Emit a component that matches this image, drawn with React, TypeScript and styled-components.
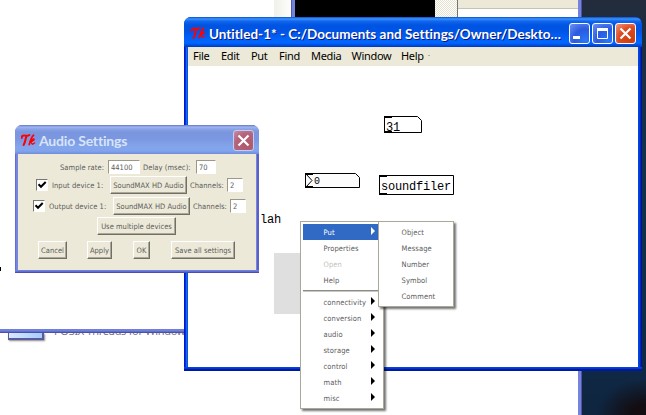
import React from 'react';
import styled, { createGlobalStyle } from 'styled-components';

const GlobalStyle = createGlobalStyle`
  * { box-sizing: border-box; }
  body { margin: 0; overflow: hidden; background: #fff; }
`;

const small = `"DejaVu Sans Condensed", "DejaVu Sans", sans-serif`;

const Desktop = styled.main`
  position: relative;
  width: 646px;
  height: 415px;
  overflow: hidden;
  background: radial-gradient(ellipse 50px 36px at 100% 100%, #130d12 30%, transparent 100%),
    linear-gradient(#222c3c, #14304a 35%, #102c48 75%, #0f2540);
  font-family: ${small};
`;

/* ---------- windows in the background ---------- */
const Backdrop = styled.section`
  position: absolute;
  left: 0;
  top: 0;
  width: 582px;
  height: 415px;
  background: #fff;
  border-right: 4px solid #7583dc;
  &::after {
    content: '';
    position: absolute;
    right: -4px;
    top: 0;
    width: 1px;
    height: 100%;
    background: #5050a8;
  }
`;
const TopStrip = styled.div`
  display: flex;
  height: 17px;
  padding-left: 274px;
`;
const PaleScroll = styled.div`
  width: 17px;
  background: linear-gradient(90deg, #f1f0ea, #fdfdfb);
`;
const Edge = styled.div`
  width: 4px;
  background: linear-gradient(90deg, #5555b4 1px, #7383dc 1px);
`;
const Console = styled.div`
  width: 140px;
  background: #000;
`;
const DitherScroll = styled.div`
  width: 23px;
  background: repeating-conic-gradient(#e4e1d0 0 25%, #fff 0 50%) 0 0 / 2px 2px;
  border-right: 1px solid #77766e;
`;
const Panel = styled.div`
  flex: 1;
  border-top: 8px solid #ece9d8;
  box-shadow: inset 0 1px #c6c3b3;
`;
const LeftEdge = styled.div`
  position: absolute;
  left: 0;
  top: 329px;
  width: 184px;
  height: 4px;
  background: linear-gradient(#6f80dc 0 2px, #6070cc 2px 3px, #4d4dae 3px);
`;
const Clipped = styled.div`
  position: absolute;
  left: 0;
  top: 333px;
  width: 184px;
  height: 12px;
  overflow: hidden;
  display: flex;
  padding-left: 8px;
`;
const Thumb = styled.div`
  flex: none;
  width: 36px;
  height: 7px;
  margin-right: 10px;
  border: solid #5a5aa0;
  border-width: 0 2px 2px 1px;
  background: linear-gradient(90deg, #d8e9fc, #a5cdfb);
  box-shadow: 1px 1px 2px #888;
`;
const ClippedText = styled.span`
  height: 2px;
  overflow: hidden;
  color: #777;
  font: 11px "Noto Sans", sans-serif;
  white-space: nowrap;
  letter-spacing: -0.3px;
  span { display: block; margin-top: -9px; line-height: 13px; }
`;
const Speck = styled.div`
  position: absolute;
  left: 0;
  top: 267px;
  width: 1px;
  height: 4px;
  background: #000;
`;

/* ---------- window frames ---------- */
const MainWindow = styled.section`
  position: absolute;
  left: 184px;
  top: 17px;
  width: 458px;
  height: 354px;
  display: flex;
  flex-direction: column;
  padding: 0 4px 4px;
  border-radius: 7px 7px 0 0;
  background: linear-gradient(#0c3fe0 0 1px, #0037d8 1px 2px, #001a9c 2px) bottom / 100% 4px no-repeat,
    linear-gradient(90deg, #0019cf 0 1px, #0831d9 1px 2px, #166aee 2px 3px, #0855dd 3px 4px, #0046e0 4px 455px, #003ddc 455px 456px, #0026b8 456px 457px, #00138c 457px);
`;
const MainTitle = styled.header`
  display: flex;
  align-items: center;
  height: 30px;
  margin: 0 -4px;
  padding: 3px 6px 0 7px;
  border-radius: 7px 7px 0 0;
  background: linear-gradient(#0b50c8 0, #3a93ff 2px, #1268f0 4px, #0054e2 8px, #0054e4 14px, #0062fa 22px, #0066ff 26px, #0050e0 28px, #0038bc 30px);
`;
const TitleText = styled.h1<{ $faded?: boolean }>`
  flex: 1;
  margin: 1px 0 0;
  font: bold ${p => (p.$faded ? '14px' : '13.5px')} Lato, "Open Sans", sans-serif;
  font-variant-ligatures: none;
  letter-spacing: ${p => (p.$faded ? '-0.2px' : '0.01px')};
  line-height: 18px;
  white-space: nowrap;
  color: ${p => (p.$faded ? '#d8e4f8' : '#fff')};
  text-shadow: ${p => (p.$faded ? 'none' : '1px 1px #0a1883')};
`;
const Controls = styled.div`
  display: flex;
  flex: none;
  gap: 2px;
`;
const Control = styled.button<{ $kind: 'blue' | 'red' | 'dim' }>`
  display: grid;
  flex: none;
  place-items: center;
  width: 21px;
  height: 21px;
  padding: 0;
  border: 1px solid ${p => (p.$kind === 'dim' ? '#c3cdf0' : '#fff')};
  border-radius: 3px;
  background: ${p =>
    p.$kind === 'blue'
      ? 'radial-gradient(circle at 80% 85%, #2a78f8, #2b5ae0 50%, #6d93f2 100%)'
      : p.$kind === 'red'
      ? 'radial-gradient(circle at 80% 85%, #d03c0c, #dc4a20 55%, #f09a80 100%)'
      : 'radial-gradient(circle at 70% 75%, #b0566a, #b4647c 60%, #c890a8 100%)'};
`;
const MenuBar = styled.nav`
  display: flex;
  height: 19px;
  flex: none;
  padding-left: 5px;
  background: #ece9d8;
  font: 11px "Noto Sans", sans-serif;
  line-height: 17px;
  color: #000;
`;
const MenuName = styled.span<{ $w: number }>`
  width: ${p => p.$w}px;
  white-space: nowrap;
  letter-spacing: -0.3px;
`;
const Dash = styled.i`
  width: 2px;
  height: 1px;
  margin-top: 8px;
  background: #aaa;
`;
const Canvas = styled.div`
  position: relative;
  flex: 1;
  background: #fff;
`;
const Node = styled.div<{ $x: number; $y: number }>`
  position: absolute;
  left: ${p => p.$x - 188}px;
  top: ${p => p.$y - 66}px;
  display: grid;
  font-family: "Liberation Mono", monospace;
  color: #000;
  > * { grid-area: 1 / 1; }
  svg { display: block; }
`;
const NodeText = styled.span<{ $size?: number; $top?: number; $left?: number }>`
  font-size: ${p => p.$size ?? 12}px;
  letter-spacing: -0.2px;
  line-height: 14px;
  padding: ${p => p.$top ?? 0}px 0 0 ${p => p.$left ?? 0}px;
`;
const GreyArray = styled.div`
  width: 110px;
  height: 61px;
  background: #dfdfdf;
`;

/* ---------- audio dialog ---------- */
const Dialog = styled.section`
  position: absolute;
  left: 15px;
  top: 125px;
  width: 244px;
  height: 148px;
  padding: 0 3px 3px;
  border-radius: 7px 7px 0 0;
  background: linear-gradient(#7080dc 0 1px, #6070d0 1px 2px, #4c4cb4 2px) bottom / 100% 3px no-repeat,
    linear-gradient(90deg, #6070cc 0 1px, #7686e0 1px 242px, #5b60c6 242px);
`;
const DialogTitle = styled.header`
  display: flex;
  align-items: center;
  height: 29px;
  margin: 0 -3px;
  padding: 2px 5px 0 6px;
  border-radius: 7px 7px 0 0;
  background: linear-gradient(#6273cc 0, #9db5ee 2px, #8ba4e6 4px, #7a96df 7px, #7b97e1 14px, #83a5ec 22px, #82a4ec 26px, #6f8cda 29px);
`;
const DialogBody = styled.div`
  height: 116px;
  padding-top: 6px;
  background: #ece9d8;
  font-size: 7.5px;
  color: #5c5c5c;
`;
const Row = styled.div<{ $h: number; $left: number; $after?: number }>`
  display: flex;
  align-items: center;
  height: ${p => p.$h}px;
  padding-left: ${p => p.$left}px;
  margin-bottom: ${p => p.$after ?? 2}px;
`;
const Caption = styled.span<{ $w: number }>`
  flex: none;
  width: ${p => p.$w}px;
  white-space: nowrap;
  letter-spacing: 0.05px;
`;
const Field = styled.span<{ $w: number; $after?: number }>`
  flex: none;
  width: ${p => p.$w}px;
  height: 14px;
  margin-right: ${p => p.$after ?? 0}px;
  padding-left: 2px;
  line-height: 13px;
  border: 1px solid;
  border-color: #9a988a #fff #fff #9a988a;
  background: #fff;
`;
const Push = styled.button<{ $w: number; $after?: number }>`
  flex: none;
  width: ${p => p.$w}px;
  height: 18px;
  margin: 0 ${p => p.$after ?? 0}px 0 0;
  padding: 0;
  border: 1px solid;
  border-color: #fff #716f64 #716f64 #fff;
  box-shadow: inset -1px -1px #aca899;
  background: #ece9d8;
  font: inherit;
  color: inherit;
  white-space: nowrap;
  letter-spacing: 0.03px;
`;
const Check = styled.span`
  flex: none;
  width: 12px;
  height: 12px;
  margin-right: 4px;
  border: 1px solid;
  border-color: #777 #fff #fff #777;
  background: #fff;
  svg { display: block; }
`;

/* ---------- popup menus ---------- */
const Popup = styled.div<{ $x: number; $w: number; $h: number }>`
  position: absolute;
  left: ${p => p.$x}px;
  top: 221px;
  width: ${p => p.$w}px;
  height: ${p => p.$h}px;
  padding: 2px;
  border: 1px solid #aca899;
  background: #fff;
  box-shadow: 2px 2px 2px rgba(0, 0, 0, 0.55);
  font-size: 7.5px;
  letter-spacing: 0.1px;
`;
const Item = styled.div<{ $on?: boolean; $off?: boolean }>`
  display: flex;
  align-items: center;
  justify-content: space-between;
  height: 16px;
  padding: 0 6px 0 20.5px;
  background: ${p => (p.$on ? '#316ac5' : 'transparent')};
  color: ${p => (p.$on ? '#fff' : p.$off ? '#c4c2b8' : '#5c5c5c')};
  svg { margin-top: -3px; }
`;
const Rule = styled.hr`
  height: 2px;
  margin: 2px 0;
  border: 0;
  background: linear-gradient(#8d8d88 1px, #c8c8c4 1px);
`;

const Logo = styled.svg`
  flex: none;
  margin-right: 3px;
`;
const TkLogo = () => (
  <Logo width="15" height="13" viewBox="0 0 15 13" fill="none" stroke="#f00" strokeLinecap="round">
    <path d="M0.8 4C0.4 1.8 2 1.3 4 1.6S7.2 1.8 8.4 1" strokeWidth="1.9" />
    <path d="M5.6 2C4.2 4.5 4.8 7.5 2.6 11" strokeWidth="2" />
    <path d="M12.6 1.2C11 2.5 9.4 6.5 8.2 10.6" strokeWidth="1.7" />
    <path d="M9.2 7.8C11.2 7.3 13.4 6.2 13.1 5.3S10.6 5.8 9.6 7.4C10.6 8 10.4 10.4 11.6 10.2L13.6 9" strokeWidth="1.4" />
  </Logo>
);
const Cross = () => (
  <svg width="13" height="13" viewBox="0 0 13 13" stroke="#fff" strokeWidth="2.2">
    <path d="M1.5 1.5L11.5 11.5M11.5 1.5L1.5 11.5" />
  </svg>
);
const Tick = () => (
  <svg width="10" height="10" viewBox="0 0 10 10" fill="none" stroke="#000" strokeWidth="2">
    <path d="M1.5 4.2L4 6.8L8.7 2" />
  </svg>
);
const Arrow = () => (
  <svg width="4" height="8" viewBox="0 0 4 8" fill="currentColor">
    <path d="M0 0L4 4L0 8Z" />
  </svg>
);
const BlackArrow = styled.span`
  display: flex;
  color: #000;
`;

const menus: [string, number][] = [
  ['File', 28], ['Edit', 30], ['Put', 28], ['Find', 32], ['Media', 40.5], ['Window', 49.5], ['Help', 27],
];
const groups = ['connectivity', 'conversion', 'audio', 'storage', 'control', 'math', 'misc'];

export default function App() {
  return (
    <Desktop>
      <GlobalStyle />
      <Backdrop>
        <TopStrip>
          <PaleScroll /><Edge /><Console /><DitherScroll /><Panel />
        </TopStrip>
      </Backdrop>
      <LeftEdge />
      <Clipped>
        <Thumb />
        <ClippedText><span>POSIX Threads for Windows</span></ClippedText>
      </Clipped>
      <Speck />

      <MainWindow>
        <MainTitle>
          <TkLogo />
          <TitleText>Untitled-1* - C:/Documents and Settings/Owner/Deskto…</TitleText>
          <Controls>
            <Control $kind="blue">
              <svg width="15" height="15"><rect x="1" y="10" width="7" height="3" fill="#fff" /></svg>
            </Control>
            <Control $kind="blue">
              <svg width="15" height="15" fill="none" stroke="#fff"><path d="M2.5 3V12.5H12.5V3" /><path d="M2 3.5H13" strokeWidth="3" /></svg>
            </Control>
            <Control $kind="red"><Cross /></Control>
          </Controls>
        </MainTitle>
        <MenuBar>
          {menus.map(([name, w]) => <MenuName key={name} $w={w}>{name}</MenuName>)}
          <Dash />
        </MenuBar>
        <Canvas>
          <Node $x={384} $y={116}>
            <svg width="38" height="17" fill="none" stroke="#000">
              <path d="M0.5 0.5H33.5L37.5 4.5V16.5H0.5Z" /><path d="M0 1H8M0 16H8" strokeWidth="2" />
            </svg>
            <NodeText $top={5} $left={2}>31</NodeText>
          </Node>
          <Node $x={305} $y={173}>
            <svg width="55" height="15" fill="#fcfcfc" stroke="#000">
              <path d="M0.5 0.5H50.5L54.5 4.5V14.5H0.5Z" /><path d="M0 1H8M0 14H8" strokeWidth="2" /><path d="M1 1L7 7.5L1 14" />
            </svg>
            <NodeText $size={10} $top={2} $left={9}>0</NodeText>
          </Node>
          <Node $x={379} $y={175}>
            <svg width="75" height="20" fill="none" stroke="#000">
              <path d="M0.5 0.5H74.5V19.5H0.5Z" /><path d="M0 1H8M0 19H8" strokeWidth="2" />
            </svg>
            <NodeText $top={5} $left={2}>soundfiler</NodeText>
          </Node>
          <Node $x={260} $y={213}><NodeText>lah</NodeText></Node>
          <Node $x={274} $y={253}><GreyArray /></Node>
        </Canvas>
      </MainWindow>

      <Dialog>
        <DialogTitle>
          <TkLogo />
          <TitleText $faded>Audio Settings</TitleText>
          <Control $kind="dim"><Cross /></Control>
        </DialogTitle>
        <DialogBody>
          <Row $h={14} $left={42}>
            <Caption $w={48}>Sample rate:</Caption>
            <Field $w={32} $after={3}>44100</Field>
            <Caption $w={53}>Delay (msec):</Caption>
            <Field $w={20}>70</Field>
          </Row>
          <Row $h={18} $left={18} $after={3}>
            <Check><Tick /></Check>
            <Caption $w={58}>Input device 1:</Caption>
            <Push $w={77} $after={3}>SoundMAX HD Audio</Push>
            <Caption $w={37}>Channels:</Caption>
            <Field $w={16}>2</Field>
          </Row>
          <Row $h={18} $left={15}>
            <Check><Tick /></Check>
            <Caption $w={64}>Output device 1:</Caption>
            <Push $w={77} $after={3}>SoundMAX HD Audio</Push>
            <Caption $w={37}>Channels:</Caption>
            <Field $w={16}>2</Field>
          </Row>
          <Row $h={18} $left={79} $after={6}>
            <Push $w={79}>Use multiple devices</Push>
          </Row>
          <Row $h={18} $left={20}>
            <Push $w={29} $after={20}>Cancel</Push>
            <Push $w={25} $after={21}>Apply</Push>
            <Push $w={17} $after={21}>OK</Push>
            <Push $w={64}>Save all settings</Push>
          </Row>
        </DialogBody>
      </Dialog>

      <Popup $x={300} $w={84} $h={188}>
        <Item $on>Put<Arrow /></Item>
        <Item>Properties</Item>
        <Item $off>Open</Item>
        <Item>Help</Item>
        <Rule />
        {groups.map(g => <Item key={g}>{g}<BlackArrow><Arrow /></BlackArrow></Item>)}
      </Popup>
      <Popup $x={378} $w={76} $h={86}>
        {['Object', 'Message', 'Number', 'Symbol', 'Comment'].map(t => <Item key={t}>{t}</Item>)}
      </Popup>
    </Desktop>
  );
}
